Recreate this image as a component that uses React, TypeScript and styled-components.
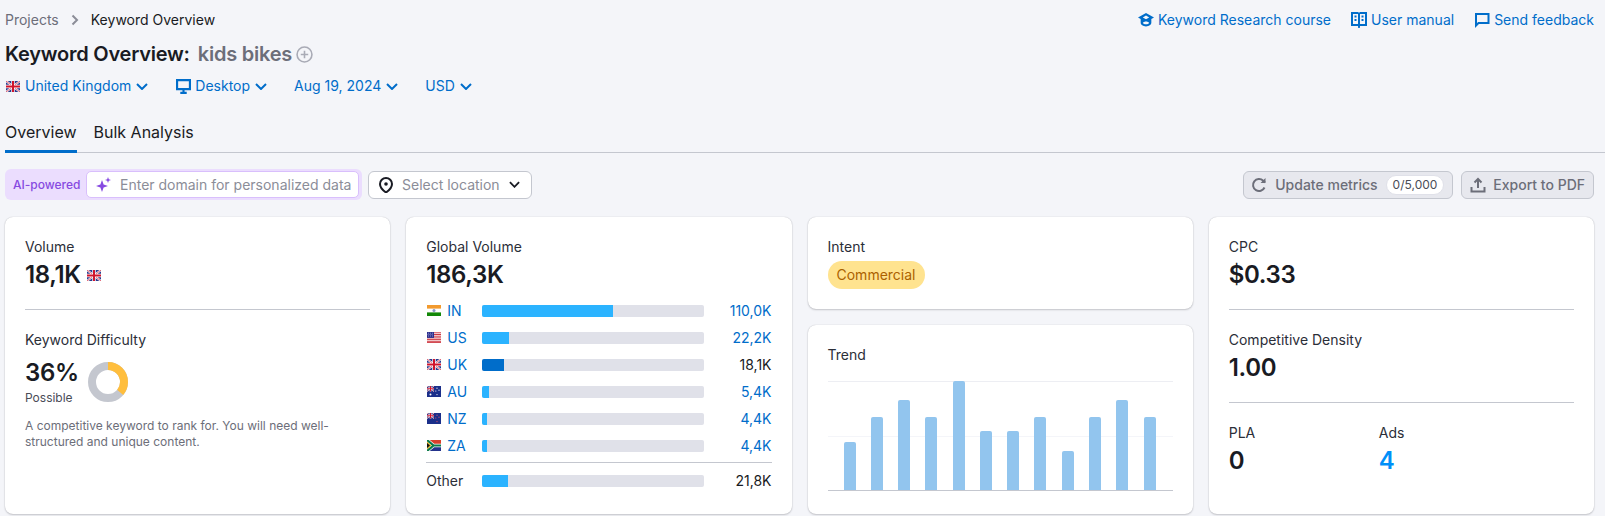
import styled, { createGlobalStyle } from 'styled-components';

const Global = createGlobalStyle`
	html, body {
		margin: 0;
		padding: 0;
		background: #F4F5F9;
		overflow: hidden;
	}
	body {
		font-family: Inter, "Noto Sans", "Liberation Sans", sans-serif;
		font-size: 14px;
		line-height: 20px;
		color: #191B23;
	}
	* {
		box-sizing: border-box;
	}
`

const Page = styled.div`
	width: 1605px;
	height: 516px;
	padding: 10px 11px 0 5px;
`

const TopRow = styled.div`
	display: flex;
	justify-content: space-between;
	height: 20px;
`

const Breadcrumbs = styled.div`
	display: flex;
	align-items: center;
	gap: 11px;
	color: #6C6E79;
	svg {
		width: 10px;
		height: 12px;
	}
	strong {
		font-weight: 400;
		color: #191B23;
	}
`

const HelpLinks = styled.div`
	display: flex;
	gap: 20px;
`

const HelpLink = styled.a`
	display: flex;
	align-items: center;
	gap: 4px;
	color: #006DCA;
	svg {
		width: 16px;
		height: 16px;
	}
`

const Title = styled.h1`
	display: flex;
	align-items: center;
	margin: 10px 0 0;
	height: 28px;
	font-size: 20px;
	line-height: 28px;
	font-weight: 600;
	letter-spacing: -0.23px;
	span {
		color: #6C6E79;
		margin-left: 8px;
	}
	svg {
		width: 17px;
		height: 17px;
		margin-left: 4px;
	}
`

const Filters = styled.div`
	display: flex;
	margin-top: 8px;
	height: 20px;
	gap: 27px;
`

const FilterItem = styled.div<{ $wide?: boolean }>`
	display: flex;
	align-items: center;
	color: #006DCA;
	margin-right: ${p => (p.$wide ? '1px' : '0')};
	> svg:last-child {
		width: 12px;
		height: 7px;
		margin-left: 5px;
	}
`

const FilterFlag = styled.span`
	display: flex;
	margin: 0 5px 0 1px;
`

const DesktopIcon = styled.svg`
	width: 15px;
	height: 15px;
	margin-right: 4px;
`

const Tabs = styled.div`
	display: flex;
	gap: 17px;
	margin: 24px -11px 0 0;
	border-bottom: 1px solid #C4C7CF;
	height: 33px;
`

const Tab = styled.div<{ $active?: boolean }>`
	font-size: 16px;
	line-height: 24px;
	height: 33px;
	border-bottom: 3px solid ${p => (p.$active ? '#006DCA' : 'transparent')};
`

const Toolbar = styled.div`
	display: flex;
	align-items: center;
	margin-top: 16px;
	height: 31px;
`

const AiBox = styled.div`
	display: flex;
	align-items: center;
	width: 357px;
	height: 31px;
	border-radius: 6px;
	background: #EBDDFE;
	padding: 0 3px 0 8px;
`

const AiLabel = styled.span`
	width: 73px;
	font-size: 12px;
	font-weight: 500;
	color: #8649E1;
`

const AiInput = styled.div`
	flex: 1;
	display: flex;
	align-items: center;
	height: 27px;
	padding-left: 9px;
	gap: 9px;
	border: 1px solid #D9BFFC;
	border-radius: 5px;
	background: #FFF;
	color: #8B8D98;
	white-space: nowrap;
	svg {
		width: 15px;
		height: 15px;
	}
`

const LocationSelect = styled.div`
	display: flex;
	align-items: center;
	width: 164px;
	height: 28px;
	margin-left: 6px;
	padding: 0 0 0 9px;
	border: 1px solid #C4C7CF;
	border-radius: 6px;
	background: #FFF;
	color: #8B8D98;
	svg:first-child {
		width: 16px;
		height: 16px;
		margin-right: 8px;
	}
	svg:last-child {
		width: 11px;
		height: 7px;
		margin-left: 9px;
	}
`

const Actions = styled.div`
	display: flex;
	gap: 8px;
	margin-left: auto;
`

const ActionButton = styled.div<{ $tight?: boolean }>`
	display: flex;
	align-items: center;
	height: 28px;
	padding: ${p => (p.$tight ? '0 8px' : '0 8px 0 7px')};
	border: 1px solid #C4C7CF;
	border-radius: 6px;
	background: #E7E8EE;
	color: #6C6E79;
	font-weight: 500;
	white-space: nowrap;
	svg {
		width: 16px;
		height: 16px;
		margin-right: ${p => (p.$tight ? '7px' : '8px')};
	}
`

const Counter = styled.span`
	margin-left: 8px;
	padding: 0 6px;
	height: 20px;
	border: 1px solid #E0E1E9;
	border-radius: 10px;
	background: #FFF;
	font-size: 12px;
	font-weight: 400;
	line-height: 18px;
	color: #4A4C57;
`

const CardGrid = styled.div`
	display: grid;
	grid-template-columns: repeat(4, 1fr);
	gap: 16px;
	margin-top: 17px;
	height: 294px;
`

const Column = styled.div`
	display: grid;
	grid-template-rows: 92px 1fr;
	gap: 16px;
`

const Card = styled.section`
	padding: 20px;
	background: #FFF;
	border-radius: 8px;
	box-shadow: 0 0 1px rgba(25, 27, 35, 0.25), 0 1px 2px rgba(25, 27, 35, 0.2);
`

const Label = styled.div`
	line-height: 20px;
	color: #2B2E38;
`

const Value = styled.div<{ $link?: boolean }>`
	display: flex;
	align-items: center;
	gap: 6px;
	margin-top: 2px;
	font-size: 24px;
	line-height: 32px;
	font-weight: 600;
	letter-spacing: -0.35px;
	color: ${p => (p.$link ? '#008FF8' : '#191B23')};
`

const Divider = styled.hr`
	margin: 18px 0 20px;
	border: 0;
	height: 1px;
	background: #C4C7CF;
`

const DifficultyRow = styled.div`
	display: flex;
	align-items: flex-start;
	gap: 9px;
	margin-top: 7px;
`

const DifficultyValue = styled.div`
	font-size: 24px;
	line-height: 32px;
	font-weight: 600;
	letter-spacing: -0.35px;
	small {
		display: block;
		margin-top: 1px;
		font-size: 12px;
		line-height: 16px;
		font-weight: 400;
		letter-spacing: 0;
		color: #4A4C57;
	}
`

const Donut = styled.svg`
	width: 40px;
	height: 40px;
	margin-top: 5px;
`

const Description = styled.p`
	margin: 12px 0 0;
	font-size: 12px;
	line-height: 16px;
	color: #6C6E79;
`

const CountryList = styled.div`
	margin-top: 6px;
`

const CountryRow = styled.div<{ $muted?: boolean }>`
	display: grid;
	grid-template-columns: 56px 222px 1fr;
	align-items: center;
	height: 27px;
	color: ${p => (p.$muted ? '#191B23' : '#006DCA')};
`

const CountryName = styled.div`
	display: flex;
	align-items: center;
	gap: 6px;
	padding-left: 1px;
`

const OtherName = styled.div`
	color: #2B2E38;
`

const BarTrack = styled.div`
	height: 12px;
	border-radius: 2px;
	background: #E0E1E9;
	overflow: hidden;
`

const BarFill = styled.div<{ $current?: boolean }>`
	height: 100%;
	background: ${p => (p.$current ? '#006DCA' : '#2BB3FF')};
`

const BarValue = styled.div<{ $current?: boolean }>`
	text-align: right;
	color: ${p => (p.$current ? '#191B23' : 'inherit')};
`

const RowDivider = styled.hr`
	margin: 3px 0 4px;
	border: 0;
	height: 1px;
	background: #C4C7CF;
`

const IntentPill = styled.div`
	display: inline-block;
	margin-top: 4px;
	padding: 0 9px;
	height: 28px;
	line-height: 28px;
	border-radius: 14px;
	background: #FFE38F;
	color: #AB6100;
`

const Chart = styled.div`
	display: flex;
	align-items: flex-end;
	justify-content: space-between;
	height: 110px;
	margin-top: 16px;
	padding: 0 17px 0 16px;
	border-bottom: 1px solid #C4C7CF;
	background:
		linear-gradient(#EDEEF3, #EDEEF3) top / 100% 1px no-repeat,
		linear-gradient(#F4F5F9, #F4F5F9) 0 55px / 100% 1px no-repeat;
`

const ChartBar = styled.div`
	width: 12px;
	border-radius: 2px 2px 0 0;
	background: #92C5EE;
`

const SplitRow = styled.div`
	display: grid;
	grid-template-columns: 150px 1fr;
`

const Chevron = () => (
	<svg viewBox="0 0 12 7" fill="none" stroke="currentColor" strokeWidth="2">
		<path d="M1 1l5 5 5-5" />
	</svg>
)

const FlagSvg = styled.svg`
	flex: none;
	width: 14px;
	height: 11px;
	display: block;
`

const UnionJack = () => (
	<g>
		<rect width="14" height="11" fill="#2B3A8C" />
		<path d="M0 0L14 11M14 0L0 11" stroke="#FFF" strokeWidth="2" />
		<path d="M0 0L14 11M14 0L0 11" stroke="#D0142C" strokeWidth="0.7" />
		<path d="M7 0V11M0 5.5H14" stroke="#FFF" strokeWidth="3.4" />
		<path d="M7 0V11M0 5.5H14" stroke="#D0142C" strokeWidth="2" />
	</g>
)

const Flag = ({ code }: { code: string }) => (
	<FlagSvg viewBox="0 0 14 11">
		{code === 'UK' && <UnionJack />}
		{code === 'IN' && (
			<>
				<rect width="14" height="11" fill="#FFF" />
				<rect width="14" height="3.6" fill="#F29A2E" />
				<rect y="7.4" width="14" height="3.6" fill="#138808" />
				<circle cx="7" cy="5.5" r="1.5" fill="#8A93C4" />
			</>
		)}
		{code === 'US' && (
			<>
				<rect width="14" height="11" fill="#FFF" />
				<path d="M0 .8H14M0 2.5H14M0 4.2H14M0 5.9H14M0 7.6H14M0 9.3H14M0 10.6H14" stroke="#C8232C" strokeWidth="0.9" />
				<rect width="7" height="5.9" fill="#2B2F8F" />
				<path d="M1 1.2H6.5M.5 2.6H6.5M1 4H6.5" stroke="#C9CCE8" strokeWidth="0.6" strokeDasharray="1 1" />
			</>
		)}
		{(code === 'AU' || code === 'NZ') && (
			<>
				<rect width="14" height="11" fill="#1B2F8A" />
				<g transform="scale(0.5)">
					<UnionJack />
				</g>
				{code === 'AU' && <circle cx="3.5" cy="8.4" r="1" fill="#FFF" />}
				<circle cx="10" cy="2.2" r="0.6" fill={code === 'NZ' ? '#E4586A' : '#FFF'} />
				<circle cx="12" cy="4.2" r="0.6" fill={code === 'NZ' ? '#E4586A' : '#FFF'} />
				<circle cx="8.8" cy="5" r="0.6" fill={code === 'NZ' ? '#E4586A' : '#FFF'} />
				<circle cx="10" cy="8.6" r="0.6" fill={code === 'NZ' ? '#E4586A' : '#FFF'} />
			</>
		)}
		{code === 'ZA' && (
			<>
				<rect width="14" height="5.5" fill="#D9402B" />
				<rect y="5.5" width="14" height="5.5" fill="#24338C" />
				<path d="M0 0L6.5 5.5L0 11M6.5 5.5H14" stroke="#FFF" strokeWidth="3.6" fill="none" />
				<path d="M0 0L6.5 5.5L0 11M6.5 5.5H14" stroke="#0E7A4B" strokeWidth="2.2" fill="none" />
				<path d="M0 1.8L4.4 5.5L0 9.2Z" fill="#F5B91E" />
				<path d="M0 3L3 5.5L0 8Z" fill="#111" />
			</>
		)}
	</FlagSvg>
)

const countries = [
	{ code: 'IN', value: '110,0K', pct: 59 },
	{ code: 'US', value: '22,2K', pct: 12.2 },
	{ code: 'UK', value: '18,1K', pct: 10, current: true },
	{ code: 'AU', value: '5,4K', pct: 3.2 },
	{ code: 'NZ', value: '4,4K', pct: 2.3 },
	{ code: 'ZA', value: '4,4K', pct: 2.3 },
]

const trend = [48, 73, 90, 73, 109, 59, 59, 73, 39, 73, 90, 73]

const App = () => {
	return (
		<Page>
			<Global />
			<TopRow>
				<Breadcrumbs>
					Projects
					<svg viewBox="0 0 10 12" fill="none" stroke="#8B8D98" strokeWidth="2">
						<path d="M2.500 1.500L7 6l-4.500 4.500" />
					</svg>
					<strong>Keyword Overview</strong>
				</Breadcrumbs>
				<HelpLinks>
					<HelpLink>
						<svg viewBox="0.5 1 15 14" fill="#006DCA">
							<path d="M8 1.500L0.500 5.600 3 7v3.600c0 2 2.300 3.400 5 3.400s5-1.400 5-3.400V7l2.500-1.400L8 1.500zM8 3.800l3 1.800-3 1.700-3-1.700 3-1.800zM8 12c-1.400 0-2.400-.6-3-1.300.6-.9 1.700-1.400 3-1.400s2.400.5 3 1.400c-.6.7-1.600 1.300-3 1.300z" />
						</svg>
						Keyword Research course
					</HelpLink>
					<HelpLink>
						<svg viewBox="0 0 16 16" fill="#006DCA">
							<path fillRule="evenodd" d="M0 0h7.200v.6h1.600V0H16v14H9l-.2 2H7.200L7 14H0V0zm2 2v10h5V2H2zm7 0v10h5V2H9z" />
							<path d="M3.500 3.500h2v2h-2zM10.500 3.500h2v2h-2zM3.500 7h2v2h-2zM10.500 7h2v2h-2z" />
						</svg>
						User manual
					</HelpLink>
					<HelpLink>
						<svg viewBox="0 0 16 16" fill="none" stroke="#006DCA" strokeWidth="2">
							<path d="M2 13.500V2h12.500v9H4.500L2 13.500z" />
						</svg>
						Send feedback
					</HelpLink>
				</HelpLinks>
			</TopRow>

			<Title>
				Keyword Overview:
				<span>kids bikes</span>
				<svg viewBox="0 0 16 16" fill="none" stroke="#A9ABB6" strokeWidth="1.5">
					<circle cx="8" cy="8" r="7" />
					<path d="M8 4.500v7M4.500 8h7" />
				</svg>
			</Title>

			<Filters>
				<FilterItem $wide>
					<FilterFlag>
						<Flag code="UK" />
					</FilterFlag>
					United Kingdom
					<Chevron />
				</FilterItem>
				<FilterItem>
					<DesktopIcon viewBox="0 0 14 14" fill="none" stroke="#006DCA" strokeWidth="2">
						<path d="M1 1h12v8.500H1zM4 13h6" />
						<path d="M7 10v3" />
					</DesktopIcon>
					Desktop
					<Chevron />
				</FilterItem>
				<FilterItem>
					Aug 19, 2024
					<Chevron />
				</FilterItem>
				<FilterItem>
					USD
					<Chevron />
				</FilterItem>
			</Filters>

			<Tabs>
				<Tab $active>Overview</Tab>
				<Tab>Bulk Analysis</Tab>
			</Tabs>

			<Toolbar>
				<AiBox>
					<AiLabel>AI-powered</AiLabel>
					<AiInput>
						<svg viewBox="0 0 15 15" fill="#8649E1">
							<path d="M6 3l1.600 4.400L12 9l-4.400 1.600L6 15l-1.600-4.400L0 9l4.400-1.600L6 3zM12 0l.8 2.200 2.200.8-2.200.8-.8 2.200-.8-2.200L9 3l2.200-.8L12 0z" />
						</svg>
						Enter domain for personalized data
					</AiInput>
				</AiBox>
				<LocationSelect>
					<svg viewBox="0 0 16 16" fill="none" stroke="#191B23" strokeWidth="2">
						<path d="M8 15.500s-6-4.100-6-8.500a6 6 0 0 1 12 0c0 4.400-6 8.500-6 8.500z" />
						<circle cx="8" cy="7" r="1.800" fill="#191B23" stroke="none" />
					</svg>
					Select location
					<svg viewBox="0 0 12 7" fill="none" stroke="#191B23" strokeWidth="2">
						<path d="M1 1l5 5 5-5" />
					</svg>
				</LocationSelect>
				<Actions>
					<ActionButton>
						<svg viewBox="0 0 16 16" fill="none" stroke="#6C6E79" strokeWidth="2">
							<path d="M13.500 10.500A6 6 0 1 1 12.200 3.700L14 5.500" />
							<path d="M14.500 1v5h-5" fill="#6C6E79" stroke="none" />
						</svg>
						Update metrics
						<Counter>0/5,000</Counter>
					</ActionButton>
					<ActionButton $tight>
						<svg viewBox="0 0 16 16" fill="none" stroke="#6C6E79" strokeWidth="2">
							<path d="M8 11V2.500M4.500 5.500L8 2l3.500 3.500M1.500 10v4.500h13V10" />
						</svg>
						Export to PDF
					</ActionButton>
				</Actions>
			</Toolbar>

			<CardGrid>
				<Card>
					<Label>Volume</Label>
					<Value>
						18,1K
						<Flag code="UK" />
					</Value>
					<Divider />
					<Label>Keyword Difficulty</Label>
					<DifficultyRow>
						<DifficultyValue>
							36%
							<small>Possible</small>
						</DifficultyValue>
						<Donut viewBox="0 0 40 40">
							<circle cx="20" cy="20" r="16" fill="none" stroke="#C4C7CF" strokeWidth="8" />
							<circle
								cx="20"
								cy="20"
								r="16"
								fill="none"
								stroke="#FFBE3D"
								strokeWidth="8"
								strokeDasharray="36.2 100.53"
								transform="rotate(-90 20 20)"
							/>
						</Donut>
					</DifficultyRow>
					<Description>
						A competitive keyword to rank for. You will need well-structured and unique content.
					</Description>
				</Card>

				<Card>
					<Label>Global Volume</Label>
					<Value>186,3K</Value>
					<CountryList>
						{countries.map(c => (
							<CountryRow key={c.code}>
								<CountryName>
									<Flag code={c.code} />
									{c.code}
								</CountryName>
								<BarTrack>
									<BarFill $current={c.current} style={{ width: `${c.pct}%` }} />
								</BarTrack>
								<BarValue $current={c.current}>{c.value}</BarValue>
							</CountryRow>
						))}
						<RowDivider />
						<CountryRow $muted>
							<OtherName>Other</OtherName>
							<BarTrack>
								<BarFill style={{ width: '11.7%' }} />
							</BarTrack>
							<BarValue>21,8K</BarValue>
						</CountryRow>
					</CountryList>
				</Card>

				<Column>
					<Card>
						<Label>Intent</Label>
						<IntentPill>Commercial</IntentPill>
					</Card>
					<Card>
						<Label>Trend</Label>
						<Chart>
							{trend.map((h, i) => (
								<ChartBar key={i} style={{ height: h }} />
							))}
						</Chart>
					</Card>
				</Column>

				<Card>
					<Label>CPC</Label>
					<Value>$0.33</Value>
					<Divider />
					<Label>Competitive Density</Label>
					<Value>1.00</Value>
					<Divider />
					<SplitRow>
						<div>
							<Label>PLA</Label>
							<Value>0</Value>
						</div>
						<div>
							<Label>Ads</Label>
							<Value $link>4</Value>
						</div>
					</SplitRow>
				</Card>
			</CardGrid>
		</Page>
	)
}

export default App;
